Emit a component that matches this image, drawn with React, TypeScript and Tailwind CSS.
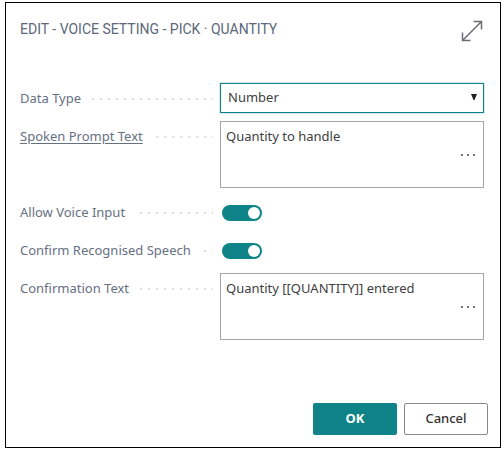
import { useState } from 'react';
import type { ReactNode } from 'react';

function Field({ id, label, link = false, children }: { id: string; label: string; link?: boolean; children: ReactNode }) {
  return (
    <div className="flex items-start">
      <div className="flex h-8 w-[193px] shrink-0 items-center">
        <label htmlFor={id} className={link ? 'shrink-0 whitespace-nowrap underline underline-offset-2' : 'shrink-0 whitespace-nowrap'}>
          {label}
        </label>
        <span
          aria-hidden="true"
          className="ml-2.5 h-0.5 flex-1 bg-[linear-gradient(to_right,#dcdee1_1px,transparent_1px,transparent_7px,#dcdee1_7px)] bg-[length:8px_2px] bg-right bg-repeat-x"
        />
      </div>
      <div className="ml-[7px] min-w-0 flex-1">{children}</div>
    </div>
  );
}

function TextBox({ id, initial }: { id: string; initial: string }) {
  const [value, setValue] = useState(initial);
  return (
    <div className="relative h-[70px]">
      <textarea
        id={id}
        value={value}
        onChange={(e) => setValue(e.target.value)}
        className="block h-[67px] w-full resize-none border border-[#a6a6a6] bg-white py-1 pr-9 pl-[5px] leading-5 text-[#404040] outline-none"
      />
      <button type="button" aria-label="Edit text" className="absolute top-6 right-1.5 flex h-5 w-5 items-center justify-center text-[#333]">
        <svg width="16" height="4" viewBox="0 0 16 4" fill="currentColor">
          <circle cx="2" cy="2" r="0.9" />
          <circle cx="8" cy="2" r="0.9" />
          <circle cx="14" cy="2" r="0.9" />
        </svg>
      </button>
    </div>
  );
}

function Toggle({ id }: { id: string }) {
  return (
    <div className="flex h-8 items-center pl-0.5">
      <input
        id={id}
        type="checkbox"
        role="switch"
        defaultChecked
        className="h-4 w-10 appearance-none rounded-full bg-[#8a929c] p-0.5 before:block before:h-3 before:w-3 before:rounded-full before:bg-white checked:bg-[#0e8388] checked:before:ml-auto"
      />
    </div>
  );
}

export default function App() {
  return (
    <main className="bg-white pt-0.5 pr-px pb-0.5 pl-[5px] font-['Noto_Sans',sans-serif] text-[13px] text-[#667083]">
      <form className="border border-black pt-4 pr-3 pb-3 pl-3.5" onSubmit={(e) => e.preventDefault()}>
        <header className="flex items-start justify-between">
          <h1 className="font-['Roboto',sans-serif] text-[14px] leading-5 text-[#5c677a]">EDIT - VOICE SETTING - PICK · QUANTITY</h1>
          <button type="button" aria-label="Expand" className="mr-1 h-6 w-6 text-[#6b6f75]">
            <svg width="24" height="24" viewBox="0 0 24 24" fill="none" stroke="currentColor" strokeWidth="1.5">
              <path d="M2.5 21.5 21.5 2.5M13.5 2.5h8v8M2.5 13.5v8h8" />
            </svg>
          </button>
        </header>
        <div className="flex flex-col gap-1.5 pt-10 pr-1">
          <Field id="type" label="Data Type">
            <div className="relative">
              <select
                id="type"
                className="block h-[30px] w-full appearance-none border border-[#0e8388] bg-white px-[7px] text-[#404040] shadow-[0_0_1px_#0e8388] outline-none"
              >
                <option>Number</option>
                <option>Text</option>
              </select>
              <svg className="pointer-events-none absolute top-[11px] right-[7px]" width="6" height="6" viewBox="0 0 6 6">
                <path d="M0 0h6L3.5 6h-1z" fill="#222" />
              </svg>
            </div>
          </Field>
          <Field id="prompt" label="Spoken Prompt Text" link>
            <TextBox id="prompt" initial="Quantity to handle" />
          </Field>
          <Field id="voice" label="Allow Voice Input">
            <Toggle id="voice" />
          </Field>
          <Field id="speech" label="Confirm Recognised Speech">
            <Toggle id="speech" />
          </Field>
          <Field id="confirmation" label="Confirmation Text">
            <TextBox id="confirmation" initial="Quantity [[QUANTITY]] entered" />
          </Field>
        </div>
        <footer className="flex justify-end gap-[7px] pt-[60px]">
          <button type="submit" className="h-8 w-[84px] rounded-xs bg-[#0e8388] font-bold text-white">
            OK
          </button>
          <button type="button" className="h-8 w-[84px] rounded-xs border border-[#8a8a8a] bg-white font-medium text-[#333]">
            Cancel
          </button>
        </footer>
      </form>
    </main>
  );
}
